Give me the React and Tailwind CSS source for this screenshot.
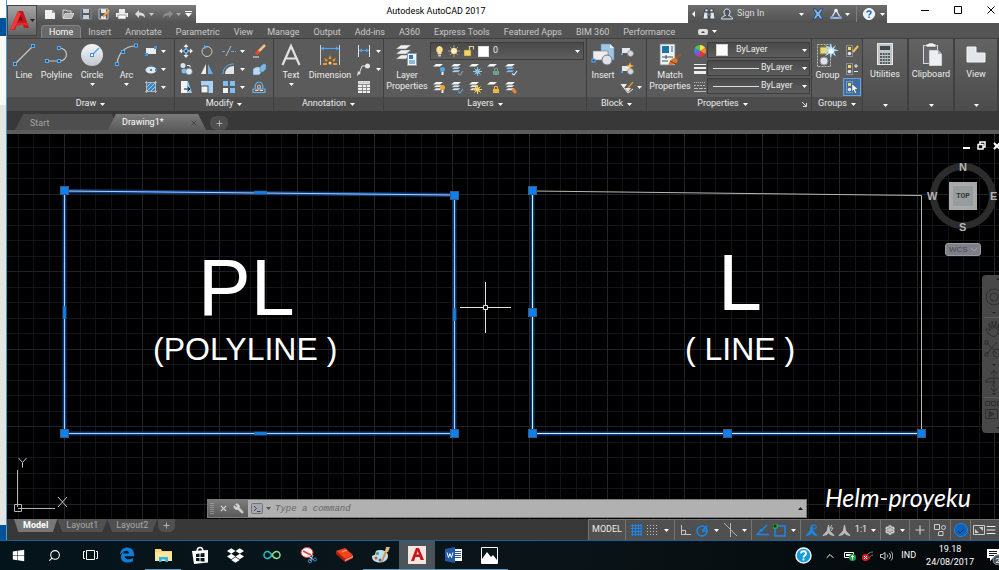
import React, { useState } from 'react';
import { ChevronUp, Search, Wrench, X, Settings, Plus, Menu } from 'lucide-react';
import { FaDropbox, FaWindows } from 'react-icons/fa';

const Svg = ({ w = 14, h = 14, box, className = '', children }) => (
  <svg width={w} height={h} viewBox={box || `0 0 ${w} ${h}`} fill="none" className={`shrink-0 ${className}`} aria-hidden="true">
    {children}
  </svg>
);

const Caret = ({ className = 'text-white' }) => (
  <Svg w={5} h={3} className={className}>
    <path d="M0 0h5L2.500 3z" fill="currentColor" />
  </Svg>
);

// ---------- big ribbon icons ----------

const Grip = ({ x, y }) => <rect x={x - 1.5} y={y - 1.5} width="3" height="3" fill="#1d4f86" stroke="#58aef5" />;

const LineIcon = () => (
  <Svg w={24} h={24}>
    <path d="M3 21L21 3" stroke="#c4c4c4" strokeWidth="1.200" />
    <Grip x={3} y={21} />
    <Grip x={21} y={3} />
  </Svg>
);

const PolylineIcon = () => (
  <Svg w={24} h={24}>
    <path d="M2 18h12c10 0 10-13 0-13" stroke="#c4c4c4" strokeWidth="1.200" />
    <Grip x={2} y={18} />
    <Grip x={14} y={18} />
    <Grip x={14} y={5} />
  </Svg>
);

const CircleIcon = () => (
  <Svg w={24} h={24}>
    <defs>
      <linearGradient id="disc" x1="0" y1="0" x2="0" y2="1">
        <stop offset="0" stopColor="#f4f6f8" />
        <stop offset="1" stopColor="#c2c8d0" />
      </linearGradient>
    </defs>
    <circle cx="12" cy="12" r="11" fill="url(#disc)" />
    <path d="M12 12l7-7" stroke="#4f9fe2" strokeWidth="1.200" />
    <rect x="10.500" y="10.500" width="3" height="3" fill="#fff" stroke="#3c91dc" />
  </Svg>
);

const ArcIcon = () => (
  <Svg w={24} h={24}>
    <path d="M2 21C3 11 9 3 21 3" stroke="#c4c4c4" strokeWidth="1.200" />
    <Grip x={2} y={21} />
    <Grip x={8} y={9} />
    <Grip x={21} y={2.5} />
  </Svg>
);

const TextIcon = () => (
  <Svg w={24} h={24}>
    <path d="M3.500 22L12 3l8.500 19M6.500 15.500h11" stroke="#e2e2e2" strokeWidth="2.200" />
  </Svg>
);

const DimensionIcon = () => (
  <Svg w={24} h={24}>
    <path d="M2.500 2v20M21.500 2v20" stroke="#cfcfcf" />
    <path d="M3 5.500h18" stroke="#4aa6f2" strokeWidth="1.200" />
    <path d="M3 5.500l3-2v4zM21 5.500l-3-2v4z" fill="#4aa6f2" />
    <path d="M12 12l1.500 4h-3zM6 15l4 2-2 2zM18 15l-4 2 2 2zM5 20h4v2H5zM15 20h4v2h-4z" fill="#f59a1c" />
    <circle cx="12" cy="20" r="1.500" fill="#ffd264" />
  </Svg>
);

const LayerPropsIcon = () => (
  <Svg w={24} h={24}>
    <path d="M6 2h10l-5 4H1zM6 7h10l-5 4H1zM6 12h8l-3 4H1z" fill="#eef0f2" stroke="#777" strokeWidth=".5" />
    <rect x="12.500" y="10.500" width="9" height="12" fill="#f4f4f4" stroke="#8f9aa5" />
    <rect x="14" y="12" width="4" height="4" fill="#2b7bc4" />
    <path d="M14 18h6M14 20h6" stroke="#2b7bc4" />
  </Svg>
);

const InsertIcon = () => (
  <Svg w={24} h={24}>
    <path d="M10 1h9l4 4v12H10z" fill="#9ec6e6" stroke="#5f8fb5" strokeWidth=".6" />
    <path d="M19 1v4h4" fill="#e7f2fa" />
    <rect x="2" y="8" width="15" height="9" fill="#eceef0" stroke="#777" strokeWidth=".6" />
    <circle cx="16" cy="17" r="5" fill="#dfe3e8" stroke="#6c7680" />
    <rect x="1" y="16" width="3" height="3" fill="#1d4f86" stroke="#58aef5" />
  </Svg>
);

const MatchIcon = () => (
  <Svg w={24} h={24}>
    <rect x="2" y="1" width="15" height="21" fill="#f1f2f3" stroke="#6f7d88" strokeWidth=".8" />
    <rect x="4" y="3" width="7" height="7" fill="#1c73a8" />
    <path d="M13 4h2M13 6h2M13 8h2M4 14h11M4 18h6M8 12v4" stroke="#35526a" />
    <path d="M23 11l-6 5" stroke="#9b5a26" strokeWidth="2" />
    <path d="M12 18c2-3 5-4 7-2s0 6-8 6c-1-1 0-2 1-4z" fill="#d9772a" />
    <path d="M12 18l6 3" stroke="#7c3f14" />
  </Svg>
);

const GroupIcon = () => (
  <Svg w={24} h={26}>
    <rect x="1.500" y="2.500" width="13" height="22" stroke="#bdbdbd" strokeDasharray="2 1" />
    <rect x="4" y="5" width="8" height="7" fill="#ecd86c" stroke="#8d8033" />
    <circle cx="8" cy="19" r="4" fill="#dfe4e9" stroke="#8a949e" />
    <path d="M15 1l1.200 5L20 3l-2 4 5 1.500-5 1 2 5-4-3-1 5-1.500-5-4.500 3 3-5-5-1 5-1.500-3-4 4.500 2z" fill="#a9dcff" />
    <circle cx="15" cy="9" r="2.500" fill="#fff" />
  </Svg>
);

const UtilitiesIcon = () => (
  <Svg w={24} h={24}>
    <rect x="4.500" y="1.500" width="15" height="21" fill="#bfc4c8" stroke="#e7e7e7" />
    <rect x="7" y="4" width="10" height="4" fill="#42474c" />
    <path d="M7 12h10M7 15h10M7 18h10M7 21h10" stroke="#53585d" strokeWidth="2" strokeDasharray="2 .7" />
  </Svg>
);

const ClipboardIcon = () => (
  <Svg w={24} h={24}>
    <rect x="4.500" y="3.500" width="14" height="18" fill="#66696c" stroke="#d8d8d8" />
    <path d="M7 5V2h2l1-1h4l1 1h2v3z" fill="#f4f4f4" stroke="#444" strokeWidth=".5" />
    <path d="M10 8h9l4 4v12H10z" fill="#eceef1" stroke="#777" strokeWidth=".5" />
    <path d="M19 8v4h4" fill="#a9b0b7" />
  </Svg>
);

const ViewIcon = () => (
  <Svg w={24} h={24}>
    <path d="M3 5h9v6h9v9H3z" fill="#e2e5e9" stroke="#f5f5f5" />
  </Svg>
);

// ---------- small ribbon icons ----------

const RectIcon = () => (
  <Svg>
    <rect x="2" y="4" width="10" height="6" fill="#e9ebee" />
    <path d="M1 9h3v3H1zM10 2h3v3h-3z" fill="#3d97e8" />
  </Svg>
);
const EllipseIcon = () => (
  <Svg>
    <ellipse cx="7" cy="8" rx="5.500" ry="3.500" fill="#e3e6ea" />
    <path d="M6 7h2v2H6zM6 3h2v2H6zM11 7h2v2h-2z" fill="#3d8ed6" />
  </Svg>
);
const HatchIcon = () => (
  <Svg>
    <rect x="3" y="3" width="8" height="8" fill="#3c83bd" />
    <path d="M3 11l8-8M3 7l4-4M7 11l4-4" stroke="#a5cdec" />
    <path d="M1 2.500h12M1 11.500h12M2.500 1v12M11.500 1v12" stroke="#b4b8bb" />
  </Svg>
);
const MoveIcon = () => (
  <Svg>
    <path d="M7 0l2.500 3h-5zM7 14l2.500-3h-5zM0 7l3-2.500v5zM14 7l-3-2.500v5z" fill="#eee" />
    <path d="M7 2v10M2 7h10" stroke="#eee" />
    <rect x="5.500" y="5.500" width="3" height="3" fill="#1d4f86" stroke="#58aef5" />
  </Svg>
);
const RotateIcon = () => (
  <Svg>
    <circle cx="7" cy="7.500" r="5" stroke="#ccc" />
    <path d="M4 1l4 2-4 2z" fill="#58aef5" />
  </Svg>
);
const TrimIcon = () => (
  <Svg>
    <path d="M0 7.500h4M9 7.500h5" stroke="#58aef5" strokeDasharray="3 1" />
    <path d="M4 12L9 2" stroke="#bcbcbc" />
  </Svg>
);
const EraseIcon = () => (
  <Svg>
    <path d="M13 1L6 8" stroke="#e9c58a" strokeWidth="2.500" />
    <path d="M7 7L4 10" stroke="#e14a20" strokeWidth="3.500" />
    <path d="M1 13h6" stroke="#efefef" />
  </Svg>
);
const CopyIcon = () => (
  <Svg>
    <circle cx="4" cy="3.500" r="2.500" fill="#dfe4e8" />
    <circle cx="5" cy="9" r="2.500" fill="#7dbdf0" />
    <circle cx="10" cy="9.500" r="3.300" fill="#dfe9f2" stroke="#5a6a78" strokeWidth=".5" />
    <path d="M8 3.500h3v2" stroke="#e9e9e9" />
  </Svg>
);
const MirrorIcon = () => (
  <Svg>
    <path d="M6 2v10H1z" fill="#eceef0" />
    <path d="M8 2v10h5z" fill="#69afe6" />
  </Svg>
);
const FilletIcon = () => (
  <Svg>
    <path d="M3 12C3 7 7 4 12 4v8z" fill="#e3e6e9" />
    <path d="M1 12C1 5 6 2 12 2" stroke="#58aef5" />
  </Svg>
);
const ExplodeIcon = () => (
  <Svg>
    <path d="M1 7l3-2h5v6l-2 2H1z" fill="#b9daf2" stroke="#4a7ea8" strokeWidth=".6" />
    <path d="M8 5l3-3h3v5l-3 3H8z" fill="#7fb8e6" stroke="#4a7ea8" strokeWidth=".6" />
  </Svg>
);
const StretchIcon = () => (
  <Svg>
    <path d="M2 1h6v12H2z" fill="#f0f2f4" />
    <path d="M8 1h1l4 12H8z" fill="#8ecbf5" />
    <path d="M5 9h6M8.500 7l2.500 2-2.500 2" stroke="#111" />
  </Svg>
);
const ScaleIcon = () => (
  <Svg>
    <rect x="1" y="1" width="12" height="12" fill="#a8d2f3" />
    <rect x="1" y="6" width="7" height="7" fill="#eef0f2" stroke="#4a4a4a" />
  </Svg>
);
const ArrayIcon = () => (
  <Svg>
    <path d="M1 1h5v5H1zM8 1h5v5H8zM8 8h5v5H8z" fill="#7dbdf0" />
    <path d="M1 8h5v5H1z" fill="#eaf1f7" />
  </Svg>
);
const OffsetIcon = () => (
  <Svg>
    <path d="M1 12.500h12V9h-3c2-3 0-7-3-7S2 6 4 9H1z" stroke="#6cb4ec" strokeWidth="1.200" />
    <path d="M3 10.500h3V8c-2-4 4-4 2 0v2.500h3" stroke="#e4e4e4" />
  </Svg>
);
const LinearIcon = () => (
  <Svg>
    <path d="M1.500 1v12M12.500 1v12" stroke="#e3e3e3" />
    <path d="M2 6.500h10" stroke="#4aa6f2" />
    <path d="M2 6.500l3-2v4zM12 6.500l-3-2v4z" fill="#4aa6f2" />
  </Svg>
);
const LeaderIcon = () => (
  <Svg>
    <path d="M2 12L5 4h5" stroke="#ddd" />
    <circle cx="10.500" cy="4" r="2.500" fill="#dde8f2" />
    <path d="M0 14l1-5 3 2z" fill="#ddd" />
  </Svg>
);
const TableIcon = () => (
  <Svg>
    <rect x="1" y="1" width="12" height="12" fill="#f1f1f1" />
    <path d="M1 2.500h12" stroke="#c9ced3" strokeWidth="2" />
    <path d="M1 4.500h12M1 7.500h12M1 10.500h12M5.500 4v9M9.500 4v9" stroke="#8a8a8a" />
  </Svg>
);

// stacked sheets with a coloured mark in the corner
const LayerIcon = ({ mark = '#4da6f0', kind = 'dot', stack = true, tint = '#f0f1f3' }) => (
  <Svg>
    {stack && <path d="M4 5h7l-3 2.500H1zM4 8h7l-3 2.500H1z" fill={tint} stroke="#444" strokeWidth=".5" />}
    <path d="M4 2h7l-3 2.500H1z" fill="#f4f5f6" />
    {kind === 'dot' && (
      <>
        <circle cx="10.500" cy="7.500" r="2.500" fill={mark} />
        <path d="M9.500 10h2v3h-2z" fill="#f2f2f2" />
      </>
    )}
    {kind === 'sun' && (
      <>
        <path d="M9.500 5v9M5 9.500h9M6.500 6.500l6 6M12.500 6.500l-6 6" stroke={mark} />
        <circle cx="9.500" cy="9.500" r="2.300" fill={mark} />
      </>
    )}
    {kind === 'lock' && (
      <>
        <rect x="7" y="9" width="6" height="4" fill={mark} />
        <path d="M8.500 9V6.500h3V9" stroke={mark} />
      </>
    )}
    {kind === 'check' && <path d="M8 11.500l2 1.500 3-4" stroke={mark} strokeWidth="1.200" />}
    {kind === 'brush' && <path d="M7 10l3-2 3 4-2 2z" fill={mark} />}
  </Svg>
);

const BlockIcon = ({ star }) => (
  <Svg>
    <rect x="2" y="4" width="8" height="5" fill="#e6e8eb" />
    <circle cx="10.500" cy="9.500" r="3" fill="#d4d9de" stroke="#777" strokeWidth=".6" />
    <rect x="1" y="9" width="2" height="2" fill="#4da6f0" />
    {star && <path d="M10 0l1 3 3 1-3 1-1 3-1-3-3-1 3-1z" fill="#fdb83f" />}
  </Svg>
);
const AttrIcon = () => (
  <Svg>
    <path d="M1 4h6L4 8zM5 8h6l-3 4z" fill="#ededed" />
    <path d="M1 4l3 4 4 5 5-4" stroke="#ededed" />
    <path d="M13 2L8 8" stroke="#dc8f35" strokeWidth="1.500" />
  </Svg>
);

const ColorWheel = () => (
  <Svg w={12} h={12}>
    <path d="M6 6V0a6 6 0 0 1 5.200 3z" fill="#ffe04a" />
    <path d="M6 6l5.200-3a6 6 0 0 1 0 6z" fill="#f28b2a" />
    <path d="M6 6l5.200 3A6 6 0 0 1 6 12z" fill="#e23636" />
    <path d="M6 6v6A6 6 0 0 1 .8 9z" fill="#a246c9" />
    <path d="M6 6L.8 9a6 6 0 0 1 0-6z" fill="#3f7fe0" />
    <path d="M6 6L.8 3A6 6 0 0 1 6 0z" fill="#54c05a" />
  </Svg>
);
const WeightIcon = () => (
  <Svg w={12} h={12}>
    <path d="M0 1.500h12" stroke="#eee" />
    <path d="M0 5h12" stroke="#eee" strokeWidth="2" />
    <path d="M0 9.500h12" stroke="#eee" strokeWidth="3" />
  </Svg>
);
const LinetypeIcon = () => (
  <Svg w={12} h={12}>
    <path d="M0 1.500h12" stroke="#bbb" strokeDasharray="1 1" />
    <path d="M0 4.500h12" stroke="#bbb" strokeDasharray="2 1" />
    <path d="M0 7.500h12" stroke="#bbb" strokeDasharray="4 1" />
    <path d="M0 10.500h12" stroke="#bbb" />
  </Svg>
);

const GroupSmall = ({ kind }) => (
  <Svg>
    <path d="M1.500 1.500h6v11h-6z" stroke="#bdbdbd" strokeDasharray="1 1" />
    <rect x="3" y="3" width="3" height="3" fill="#ecd86c" />
    <circle cx="4.500" cy="9.500" r="1.800" fill="#dfe4e9" />
    {kind === 'edit' && <path d="M13 2L8 8" stroke="#f3c14b" strokeWidth="2" />}
    {kind === 'add' && <path d="M9 4h4M11 2v4M9 9.500h4" stroke="#e9e9e9" />}
    {kind === 'pick' && <path d="M7 4l6 5-3 .5 1.500 3-1.500 1L8.500 10 7 12z" fill="#fff" stroke="#333" strokeWidth=".4" />}
  </Svg>
);

// ---------- ribbon building blocks ----------

const BigButton = ({ icon, lines, width, caret }) => (
  <button className={`flex flex-col items-center ${width}`}>
    <span className="flex h-[26px] items-center">{icon}</span>
    <span className="pt-[2px]">
      {lines.map((line) => (
        <span key={line} className="block whitespace-nowrap leading-[11px]">{line}</span>
      ))}
    </span>
    {caret && <Caret className="mt-[2px] text-white" />}
  </button>
);

const SmallButton = ({ icon, label, width = 'w-5', active }) => (
  <button
    aria-label={label}
    className={`flex h-[18px] items-center justify-center ${width} ${active ? 'border border-[#6f9fd0] bg-[#3a6ea5]' : ''}`}
  >
    {icon}
  </button>
);

const Panel = ({ title, width, launcher, children }) => (
  <section className={`flex shrink-0 flex-col border-r border-[#3f3f3f] bg-[#5b5b5b] ${width}`}>
    <div className="flex h-[58px] pt-[3px]">{children}</div>
    <button className="flex h-[14px] w-full items-center justify-center gap-1 bg-[#4c4c4c]">
      <span className={launcher ? 'ml-auto' : ''}>{title}</span>
      <Caret />
      {launcher && (
        <Svg w={5} h={5} className="mr-1 ml-auto">
          <path d="M0 0l4 4M4.500 1v3.500H1" stroke="#ddd" />
        </Svg>
      )}
    </button>
  </section>
);

const TallPanel = ({ title, width, icon }) => (
  <button className={`flex shrink-0 flex-col items-center border-r-2 border-[#404040] bg-linear-to-b from-[#636363] to-[#4c4c4c] pt-[3px] ${width}`}>
    {icon}
    <span className="mt-[3px] leading-[11px]">{title}</span>
    <Caret className="mt-auto mb-1 text-white" />
  </button>
);

const ByLayerSelect = ({ label, swatch }) => (
  <div className="mb-[2px] flex h-4 items-center border border-[#3c3c3c] bg-linear-to-b from-[#4a4a4a] to-[#5d5d5d] pr-[2px]">
    {swatch ? (
      <span className="mr-1 ml-2 size-[12px] shrink-0 border border-[#d0d0d0] bg-white" />
    ) : (
      <span className="ml-[5px] h-px flex-1 bg-[#ddd]" />
    )}
    <select aria-label={label} className={`appearance-none bg-transparent outline-none ${swatch ? 'flex-1 pl-1' : 'w-[43px] pl-[2px]'}`}>
      <option>ByLayer</option>
    </select>
    <Caret />
  </div>
);

const drawSmall = [
  { label: 'Rectangle', icon: <RectIcon /> },
  { label: 'Ellipse', icon: <EllipseIcon /> },
  { label: 'Hatch', icon: <HatchIcon /> },
];

const modifyRows = [
  [['Move', <MoveIcon />], ['Rotate', <RotateIcon />], ['Trim', <TrimIcon />], ['Erase', <EraseIcon />]],
  [['Copy', <CopyIcon />], ['Mirror', <MirrorIcon />], ['Fillet', <FilletIcon />], ['Explode', <ExplodeIcon />]],
  [['Stretch', <StretchIcon />], ['Scale', <ScaleIcon />], ['Array', <ArrayIcon />], ['Offset', <OffsetIcon />]],
];

const layerRows = [
  [
    ['Off', <LayerIcon stack={false} />],
    ['Isolate', <LayerIcon kind="check" mark="#8f9aa3" tint="#a9d3f5" />],
    ['Freeze', <LayerIcon stack={false} kind="sun" mark="#8cc8f5" />],
    ['Lock', <LayerIcon stack={false} kind="lock" mark="#6f9f93" />],
    ['Make Current', <LayerIcon kind="check" mark="#cfe6f7" tint="#7dbdf0" />],
  ],
  [
    ['Turn All On', <LayerIcon mark="#f8a62f" />],
    ['Unisolate', <LayerIcon kind="check" mark="#5fa3d8" tint="#cfe6f7" />],
    ['Thaw All', <LayerIcon kind="sun" mark="#ffd65a" />],
    ['Unlock', <LayerIcon stack={false} kind="lock" mark="#f3b93b" />],
    ['Match Layer', <LayerIcon kind="brush" mark="#e58432" />],
  ],
];

const Ribbon = () => (
  <div className="flex h-[73px] overflow-hidden border-t border-[#404040] bg-[#5b5b5b] text-[9px] text-[#ececec]">
    <Panel title="Draw" width="w-[168px]">
      <BigButton icon={<LineIcon />} lines={['Line']} width="w-[34px]" />
      <BigButton icon={<PolylineIcon />} lines={['Polyline']} width="w-[31px]" />
      <BigButton icon={<CircleIcon />} lines={['Circle']} width="w-[40px]" caret />
      <BigButton icon={<ArcIcon />} lines={['Arc']} width="w-[29px]" caret />
      <div>
        {drawSmall.map((item) => (
          <div key={item.label} className="flex items-center">
            <SmallButton {...item} />
            <Caret />
          </div>
        ))}
      </div>
    </Panel>

    <Panel title="Modify" width="w-[99px]">
      <div>
        {modifyRows.map((row) => (
          <div key={row[0][0]} className="grid grid-cols-[21px_22px_22px_7px_24px] items-center">
            {row.map(([label, icon], i) => (
              <React.Fragment key={label}>
                {i === 3 && <Caret />}
                <SmallButton label={label} icon={icon} width="w-full" />
              </React.Fragment>
            ))}
          </div>
        ))}
      </div>
    </Panel>

    <Panel title="Annotation" width="w-[110px]">
      <BigButton icon={<TextIcon />} lines={['Text']} width="w-[34px]" caret />
      <BigButton icon={<DimensionIcon />} lines={['Dimension']} width="w-[44px]" />
      <div>
        <div className="flex items-center"><SmallButton label="Linear" icon={<LinearIcon />} width="w-[24px]" /><Caret /></div>
        <div className="flex items-center"><SmallButton label="Leader" icon={<LeaderIcon />} width="w-[24px]" /><Caret /></div>
        <SmallButton label="Table" icon={<TableIcon />} width="w-[24px]" />
      </div>
    </Panel>

    <Panel title="Layers" width="w-[203px]">
      <BigButton icon={<LayerPropsIcon />} lines={['Layer', 'Properties']} width="w-[46px]" />
      <div className="flex-1 pr-[2px]">
        <div className="flex h-[18px] items-center gap-1 border border-[#3c3c3c] bg-linear-to-b from-[#4a4a4a] to-[#5d5d5d] pr-[3px] pl-1">
          <Svg w={9} h={13}>
            <path d="M4.500 1a3.500 3.500 0 0 1 2 6.200V9h-4V7.200A3.500 3.500 0 0 1 4.500 1z" fill="#fbe08a" />
            <path d="M3 9.500h3v2H3z" fill="#c9c9c9" />
          </Svg>
          <Svg w={12} h={12}>
            <path d="M6 0v12M0 6h12M2 2l8 8M10 2l-8 8" stroke="#a89c78" />
            <circle cx="6" cy="6" r="3" fill="#fff0b8" />
          </Svg>
          <Svg w={10} h={12}>
            <rect x="0" y="5" width="7" height="6" fill="#f1d56d" stroke="#8c7521" strokeWidth=".6" />
            <path d="M5.500 5V1.500h4v3" stroke="#e2cf80" strokeWidth="1.200" />
          </Svg>
          <span className="size-[11px] border border-[#e0e0e0] bg-white" />
          <select aria-label="Layer" className="flex-1 appearance-none bg-transparent outline-none">
            <option>0</option>
          </select>
          <Caret />
        </div>
        {layerRows.map((row) => (
          <div key={row[0][0]} className="flex">
            {row.map(([label, icon]) => (
              <SmallButton key={label} label={label} icon={icon} width="w-[18px]" />
            ))}
          </div>
        ))}
      </div>
    </Panel>

    <Panel title="Block" width="w-[60px]">
      <BigButton icon={<InsertIcon />} lines={['Insert']} width="w-[32px]" />
      <div>
        <SmallButton label="Create" icon={<BlockIcon />} width="w-4" />
        <SmallButton label="Edit" icon={<BlockIcon star />} width="w-4" />
        <div className="flex items-center gap-[2px]"><SmallButton label="Edit Attributes" icon={<AttrIcon />} width="w-4" /><Caret /></div>
      </div>
    </Panel>

    <Panel title="Properties" width="w-[165px]" launcher>
      <BigButton icon={<MatchIcon />} lines={['Match', 'Properties']} width="w-[46px]" />
      <div className="flex w-[14px] flex-col">
        <span className="flex h-[18px] items-center justify-center"><ColorWheel /></span>
        <span className="flex h-[18px] items-center justify-center"><WeightIcon /></span>
        <span className="flex h-[18px] items-center justify-center"><LinetypeIcon /></span>
      </div>
      <div className="flex-1 pr-px">
        <ByLayerSelect label="Object color" swatch />
        <ByLayerSelect label="Lineweight" />
        <ByLayerSelect label="Linetype" />
      </div>
    </Panel>

    <Panel title="Groups" width="w-[51px]">
      <BigButton icon={<GroupIcon />} lines={['Group']} width="w-[31px]" />
      <div>
        <SmallButton label="Group Edit" icon={<GroupSmall kind="edit" />} width="w-[18px]" />
        <SmallButton label="Add/Remove" icon={<GroupSmall kind="add" />} width="w-[18px]" />
        <SmallButton label="Group Selection" icon={<GroupSmall kind="pick" />} width="w-[18px]" active />
      </div>
    </Panel>

    <TallPanel title="Utilities" width="w-[46px]" icon={<UtilitiesIcon />} />
    <TallPanel title="Clipboard" width="w-[46px]" icon={<ClipboardIcon />} />
    <TallPanel title="View" width="w-[44px]" icon={<ViewIcon />} />
  </div>
);

// ---------- title bar ----------

const quickAccess = [
  ['New', <Svg w={12} h={12}><path d="M1 2h7l3 3v6H1z" fill="#f1f1f1" /><path d="M8 2v3h3" fill="#9d9d9d" /></Svg>],
  ['Open', <Svg w={12} h={12}><path d="M1 10V2h3l1 1h4v2" stroke="#ddd" /><path d="M1 10.500l2-5h9l-2.500 5z" fill="#b9b9b9" stroke="#eee" strokeWidth=".7" /></Svg>],
  ['Save', <Svg w={12} h={12}><path d="M1 1h10v10H1z" fill="#4f5964" stroke="#858d95" /><path d="M3 1h6v4H3zM3 7h6v4H3z" fill="#c9cfd4" /></Svg>],
  ['Save As', <Svg w={12} h={12}><path d="M1 1h9v10H1z" fill="#4f5964" stroke="#b9c2ca" /><path d="M3 1h5v4H3zM3 8h5v3H3z" fill="#e5e5e5" /><path d="M11 2L5 9" stroke="#f5a23a" strokeWidth="2" /></Svg>],
  ['Plot', <Svg w={12} h={12}><path d="M3 1h6v4H3zM0 5h12v4H0z" fill="#eee" /><path d="M2 7h8v4H2z" fill="#fff" stroke="#666" strokeWidth=".6" /></Svg>],
];

const QuickAccess = () => (
  <div className="mt-[5px] flex h-[18px] w-[159px] items-center bg-linear-to-b from-[#7c7c7c] to-[#525252] pl-1">
    {quickAccess.map(([label, icon]) => (
      <button key={label} aria-label={label} className="flex w-[18px] justify-center">{icon}</button>
    ))}
    <button aria-label="Undo" className="flex w-[18px] justify-center">
      <Svg w={11} h={9}><path d="M0 4l4-4v2.500c4 0 6 1.500 6 5.500-1-2-3-2.500-6-2.500V8z" fill="#dcdcdc" /></Svg>
    </button>
    <Caret className="mr-1 text-[#ccc]" />
    <button aria-label="Redo" className="flex w-[18px] justify-center">
      <Svg w={11} h={9}><path d="M11 4L7 0v2.500C3 2.500 1 4 1 8c1-2 3-2.500 6-2.500V8z" fill="#8b8b8b" /></Svg>
    </button>
    <Caret className="mr-1 text-[#aaa]" />
    <button aria-label="Customize" className="flex flex-col items-center">
      <span className="mb-px h-px w-[7px] bg-white" />
      <Svg w={7} h={4}><path d="M0 0h7L3.500 4z" fill="#fff" /></Svg>
    </button>
  </div>
);

const InfoCenter = () => (
  <div className="mt-[5px] flex h-[18px] w-[199px] items-center bg-linear-to-b from-[#6d6d6d] to-[#505050] pr-[2px] pl-1 text-[9px] text-[#ddd]">
    <Svg w={3} h={6}><path d="M3 0v6L0 3z" fill="#fff" /></Svg>
    <button aria-label="Search" className="ml-2">
      <Svg w={12} h={12}>
        <path d="M2 1h3v3H2zM7 1h3v3H7zM1 4h4v7H0zM7 4h4l1 7H7zM5 5h2v3H5z" fill="#dfe6ee" stroke="#30353a" strokeWidth=".7" />
      </Svg>
    </button>
    <button className="ml-[6px] flex items-center gap-1">
      <Svg w={12} h={12}>
        <path d="M6 1c2 0 3 1.500 3 3S8 7 7.500 7.500c2 .5 4 1.500 4 3.500H.5c0-2 2-3 4-3.500C4 7 3 5.500 3 4s1-3 3-3z" fill="#4b545e" stroke="#e5e9ee" />
      </Svg>
      Sign In
    </button>
    <Caret className="ml-auto text-white" />
    <button aria-label="Exchange" className="ml-2">
      <Svg w={12} h={12}>
        <path d="M1 1h3l2 3 2-3h3L8 6l3 5H8L6 8l-2 3H1l3-5z" fill="#7fb2e6" stroke="#1c3f78" strokeWidth=".8" />
      </Svg>
    </button>
    <button aria-label="Stay Connected" className="ml-[6px] flex items-center gap-[3px]">
      <Svg w={12} h={12}>
        <path d="M6 2l4.500 8h-9z" stroke="#c9d8ec" strokeWidth="1.500" />
        <circle cx="6" cy="2.500" r="1.800" fill="#eef" />
        <circle cx="2" cy="9.500" r="1.800" fill="#7ea3d8" />
        <circle cx="10" cy="9.500" r="1.800" fill="#7ea3d8" />
      </Svg>
      <Caret />
    </button>
    <span className="mx-[6px] h-4 w-px bg-[#808080]" />
    <button aria-label="Help" className="flex items-center gap-[5px]">
      <Svg w={12} h={12}>
        <circle cx="6" cy="6" r="5.500" fill="#e9f2fb" stroke="#fff" />
        <path d="M4 4.500C4 2.500 8 2.500 8 4.500 8 6 6 6 6 7.500M6 8.500V10" stroke="#1c6cc0" strokeWidth="1.500" />
      </Svg>
      <Caret />
    </button>
  </div>
);

const menuTabs = ['Home', 'Insert', 'Annotate', 'Parametric', 'View', 'Manage', 'Output', 'Add-ins', 'A360', 'Express Tools', 'Featured Apps', 'BIM 360', 'Performance'];

const Header = ({ tab, onTab }) => (
  <header className="flex h-[38px] bg-white">
    <div className="flex w-[30px] shrink-0 flex-col border-t-[5px] border-white bg-[#525252]">
      <button aria-label="Application menu" className="flex h-[31px] items-center border border-[#444] bg-linear-to-b from-[#a5a5a5] to-[#636363] pl-[2px]">
        <Svg w={19} h={22}>
          <path d="M0 20L8 1h5l6 17h-5l-1.500-4.500H7L5 20z" fill="#c5161d" />
          <path d="M8 1L0 20l4-1 7-15z" fill="#ee3a3a" />
          <path d="M8.500 10.500L10.500 5l2 5.500z" fill="#7c0d12" />
          <path d="M4 17c4-4 7-5 13-4l1 3c-5-2-9-1-14 2z" fill="#e02a2e" />
        </Svg>
        <Caret className="ml-px text-[#222]" />
      </button>
    </div>
    <div className="min-w-0 flex-1">
      <div className="flex h-[23px]">
        <QuickAccess />
        <h1 className="flex-1 pt-[4px] pr-3 text-center text-[9px] leading-[14px] text-black">Autodesk AutoCAD 2017</h1>
        <InfoCenter />
        <div className="flex w-[112px] justify-between pt-[6px] pr-1 pl-[34px] text-black">
          <button aria-label="Minimize" className="h-2"><Svg w={8} h={8}><path d="M0 4.500h8" stroke="currentColor" /></Svg></button>
          <button aria-label="Maximize" className="h-2"><Svg w={8} h={8}><path d="M.5.500h7v7h-7z" stroke="currentColor" /></Svg></button>
          <button aria-label="Close" className="h-2"><Svg w={8} h={8}><path d="M.5.500l7 7M7.500.500l-7 7" stroke="currentColor" /></Svg></button>
        </div>
      </div>
      <nav className="flex h-[15px] items-end bg-[#545454] pl-1 text-[9px] text-[#c9c9c9]">
        {menuTabs.map((name) => (
          <button
            key={name}
            onClick={() => onTab(name)}
            className={`h-[13px] px-[7px] leading-[12px] whitespace-nowrap ${tab === name ? 'rounded-t-sm border border-b-0 border-[#858585] bg-[#696969] text-white' : ''}`}
          >
            {name}
          </button>
        ))}
        <button aria-label="Minimize ribbon" className="ml-4 flex h-[13px] items-center gap-1">
          <Svg w={10} h={6}><rect width="10" height="6" rx="2" fill="#ddd" /><path d="M3 4l2-2 2 2z" fill="#444" /></Svg>
          <Caret />
        </button>
      </nav>
    </div>
  </header>
);

const FileTabs = () => (
  <div className="flex h-[23px] items-end border-b-4 border-[#5c5c5c] bg-[#383838] pl-2 text-[9px]">
    <button className="h-4 w-[103px] rounded-t-md bg-[#4e4e4e] pl-[15px] text-left leading-[18px] text-[#a5a5a5] [clip-path:polygon(8%_0,94%_0,100%_100%,0_100%)]">Start</button>
    <div className="-ml-[10px] flex h-4 w-[98px] items-center justify-between rounded-t-md bg-linear-to-b from-[#7a7a7a] to-[#5c5c5c] pt-[2px] pr-2 pl-[14px] text-white [clip-path:polygon(8%_0,92%_0,100%_100%,0_100%)]">
      <button>Drawing1*</button>
      <button aria-label="Close Drawing1"><X size={8} className="text-[#333]" /></button>
    </div>
    <button aria-label="New drawing" className="ml-1 flex h-[14px] w-[18px] items-center justify-center rounded-md bg-[#4e4e4e] text-[#ccc]"><Plus size={9} /></button>
  </div>
);

// ---------- drawing area ----------

const PITCH = 15.5;
const lines = (start, first, count) => Array.from({ length: count }, (_, i) => ({
  pos: Math.round(start + i * PITCH) + 0.5,
  major: (i - first) % 5 === 0,
}));
const columns = lines(10.5, 3, 130);
const rows = lines(13, 3, 70);

const SquareGrip = ({ x, y }) => <rect x={x - 3.5} y={y - 3.5} width="8" height="8" fill="#0a80f5" stroke="#3f5c7d" />;
const BarGrip = ({ x, y, tall }) => (
  <rect x={x - (tall ? 1 : 5.5)} y={y - (tall ? 5.5 : 1)} width={tall ? 3 : 12} height={tall ? 12 : 3} fill="#0a80f5" stroke="#3f5c7d" strokeWidth=".6" />
);

const Drawing = () => (
  <svg className="absolute inset-0 size-full" fontFamily="'Liberation Sans', Arial, sans-serif" fill="#fff">
    {columns.map((c) => <path key={`c${c.pos}`} d={`M${c.pos} 0V1200`} stroke={c.major ? '#23252f' : '#101419'} />)}
    {rows.map((r) => <path key={`r${r.pos}`} d={`M0 ${r.pos}H2100`} stroke={r.major ? '#1e222c' : '#12161a'} />)}

    <path d="M57.500 57L447.500 61V299.500H57.500z" fill="none" stroke="#0a55b5" strokeWidth="4" opacity=".7" />
    <path d="M57.500 57L447.500 61V299.500H57.500z" fill="none" stroke="#b4cef2" />
    <path d="M525.500 57L914.500 61.500V299.500" fill="none" stroke="#b9b9b0" />
    <path d="M525.500 57V299.500H914.500" fill="none" stroke="#0a55b5" strokeWidth="4" opacity=".7" />
    <path d="M525.500 57V299.500H914.500" fill="none" stroke="#dce9fa" />

    <SquareGrip x={57} y={56} />
    <SquareGrip x={447} y={61} />
    <SquareGrip x={57} y={299} />
    <SquareGrip x={447} y={299} />
    <BarGrip x={253} y={58} />
    <BarGrip x={253} y={299} />
    <BarGrip x={57} y={178} tall />
    <BarGrip x={447} y={180} tall />
    <SquareGrip x={525} y={56} />
    <SquareGrip x={525} y={178} />
    <SquareGrip x={525} y={299} />
    <SquareGrip x={720} y={299} />
    <SquareGrip x={914} y={299} />

    <text x="191" y="181" fontSize="79">PL</text>
    <text x="146" y="226" fontSize="32">(POLYLINE )</text>
    <text x="711" y="176" fontSize="79">L</text>
    <text x="678" y="226" fontSize="32">( LINE )</text>

    <path d="M453 173.500h23M481 173.500h23M478.500 148v23M478.500 176v23M476.500 171.500h4v4h-4z" fill="none" stroke="#e4e4e4" />

    <path d="M7.500 370.500h7v7h-7zM10.500 336v37M11 374.500h37" fill="none" stroke="#b5b5b0" />
    <path d="M11.500 324l4 4.500 4-4.500M15.500 328.500v5M51 363l9 10M60 363l-9 10" fill="none" stroke="#c4c4c0" />
  </svg>
);

const ViewCube = () => (
  <div className="absolute top-[29px] right-px h-[100px] w-[68px] text-[11px] font-bold text-[#b4b4b4]">
    <div className="size-[66px] rounded-full border-[7px] border-[#2c2c2c]" />
    <button className="absolute top-[19px] left-[19px] size-[28px] border-4 border-[#a9a9a9] bg-[#979c9f] font-[Roboto] text-[7px] leading-[20px] text-[#333]">TOP</button>
    <span className="absolute -top-[3px] left-[29px] leading-[14px]">N</span>
    <span className="absolute top-[26px] -left-[3px] leading-[14px]">W</span>
    <span className="absolute top-[26px] left-[60px] leading-[14px]">E</span>
    <span className="absolute top-[57px] left-[29px] leading-[14px]">S</span>
    <button className="absolute top-[80px] left-[15px] flex h-[13px] w-9 items-center justify-between rounded-[3px] border border-[#9b9ba3] bg-[#7f7f88] px-[3px] text-[8px] font-normal text-[#4a4a52]">
      WCS
      <Svg w={6} h={4}><path d="M0 0l3 3 3-3" stroke="#9aa3b5" /></Svg>
    </button>
  </div>
);

const NavBar = () => (
  <div className="absolute top-[141px] right-0 h-[158px] w-[17px] overflow-hidden rounded-l bg-[#484848]">
    <Svg w={22} h={158}>
      <g stroke="#2f2f2f">
        <circle cx="12" cy="22" r="8" />
        <circle cx="12" cy="22" r="4" />
        <path d="M2 42.500h20" stroke="#5a5a5a" />
        <path d="M5 56c-3-3 1-3 3 0l-1-8 3 6v-8l2 7 2-7v8l3-5-1 8c0 6-8 6-11-1z" />
        <path d="M5 68l10 11M15 67L5 79M3 66h3v3H3zM3 78h3v3H3z" />
        <circle cx="15" cy="78" r="4" />
        <path d="M3 106c4-4 14-4 18 0M12 96v20M9 99l3-4 3 4M3 107h10l-3 4M9 113l3 4 3-4" />
        <path d="M2 122.500h20" stroke="#5a5a5a" />
        <path d="M3.500 126.500h4v4h-4zM9.500 126.500h4v4h-4zM15.500 126.500h4v4h-4zM3.500 134.500h12v9h-12z" />
        <path d="M7 136l5 3-5 3z" fill="#2f2f2f" />
      </g>
      <path d="M10 37h4l-2 2zM10 89h4l-2 2zM10 118h4l-2 2zM14 5h4l-2-2zM14 152h4l-2 2z" fill="#222" />
    </Svg>
  </div>
);

const CommandLine = () => (
  <form className="absolute bottom-px left-[200px] flex h-[19px] w-[600px] max-w-[70%] items-center border border-[#7a7a7a] bg-[#b1b1b1]" onSubmit={(e) => e.preventDefault()}>
    <div className="flex h-full w-10 shrink-0 items-center gap-[5px] bg-linear-to-b from-[#7c7c7c] to-[#5a5a5a] pl-[2px] text-[#d2d2d2]">
      <Svg w={4} h={12}><path d="M1 0v12M3 0v12" stroke="#bbb" strokeDasharray="1 1" /></Svg>
      <button type="button" aria-label="Close command line"><X size={9} strokeWidth={3} /></button>
      <button type="button" aria-label="Customize command line"><Wrench size={11} fill="currentColor" className="-scale-x-100" /></button>
    </div>
    <button type="button" aria-label="Recent commands" className="ml-[3px] flex items-center gap-[3px]">
      <Svg w={12} h={11}>
        <rect x=".5" y=".5" width="11" height="10" rx="1" fill="#a2a8ad" stroke="#70757a" />
        <path d="M3 3l2.500 2.500L3 8M6 8.500h3.500" stroke="#444" />
      </Svg>
      <Caret className="text-[#555]" />
    </button>
    <input aria-label="Command" placeholder="Type a command" className="ml-1 min-w-0 flex-1 bg-transparent pt-[2px] font-['Liberation_Mono',monospace] text-[9px] italic outline-none placeholder:text-[#666]" />
    <button type="button" aria-label="Command history" className="mr-[3px]"><Caret className="rotate-180 text-[#222]" /></button>
  </form>
);

const Canvas = () => (
  <main className="relative min-h-0 flex-1 overflow-hidden bg-black font-['Liberation_Sans',Arial,sans-serif]">
    <Drawing />
    <div className="absolute top-[7px] -right-[2px] flex items-center gap-[6px] text-white">
      <button aria-label="Minimize drawing"><Svg w={9} h={9}><path d="M1 7h7" stroke="currentColor" strokeWidth="2" /></Svg></button>
      <button aria-label="Restore drawing"><Svg w={9} h={9}><path d="M1 3.500h5v4.500H1zM3 3V1h5v5H6" stroke="currentColor" strokeWidth="1.500" /></Svg></button>
      <button aria-label="Close drawing"><Svg w={9} h={9}><path d="M2 2l6 6M8 2L2 8" stroke="currentColor" strokeWidth="2" /></Svg></button>
    </div>
    <ViewCube />
    <NavBar />
    <CommandLine />
    <p className="absolute right-7 bottom-[8px] font-[Lato] text-[25px] leading-[28px] text-white italic">Helm-proyeku</p>
  </main>
);

// ---------- status bar ----------

const Cell = ({ children, className = '' }) => (
  <div className={`flex h-full items-center justify-around border-l border-[#747474] px-[2px] ${className}`}>{children}</div>
);

const Tool = ({ label, children }) => <button aria-label={label} className="flex items-center">{children}</button>;

const Person = ({ color, mark }) => (
  <Svg w={13} h={13}>
    <path d="M6.500 1l1.200 6L12 11.500 8 10.500l-1.500-2-1.500 2-4 1L5.300 7z" fill={color} stroke={color} />
    {mark === 'dot' && <circle cx="9" cy="3" r="2.200" stroke={color} />}
    {mark === 'bolt' && <path d="M10 1L8 4h3l-2 3" stroke={color} />}
  </Svg>
);

const StatusTools = () => (
  <div className="ml-auto flex h-full w-[411px] shrink-0 items-stretch overflow-hidden border-t border-[#747474] bg-[#505050] text-[9px] text-[#eee]">
    <Cell className="w-[37px] shrink-0"><button>MODEL</button></Cell>
    <Cell className="w-[49px] shrink-0">
      <Tool label="Grid"><Svg w={11} h={12}><path d="M1.500 0v12M4.500 0v12M7.500 0v12M10 0v12M0 1.500h11M0 4.500h11M0 7.500h11M0 10.500h11" stroke="#1688f0" /></Svg></Tool>
      <Tool label="Snap"><Svg w={11} h={12}><path d="M0 1.500h11M0 4.500h11M0 7.500h11M0 10.500h11" stroke="#c4c4c4" strokeDasharray="1 2" /></Svg></Tool>
      <Caret />
    </Cell>
    <Cell className="w-[77px] shrink-0">
      <Tool label="Ortho"><Svg w={11} h={11}><path d="M1.500 0v9.500H11M1.500 5.500h4v4" stroke="#c4c4c4" /></Svg></Tool>
      <Tool label="Polar"><Svg w={13} h={13}><circle cx="6" cy="7" r="5" stroke="#1688f0" strokeWidth="1.500" /><path d="M6 7h6M6 7l5-5" stroke="#1688f0" strokeWidth="1.500" /></Svg></Tool>
      <Caret />
      <Tool label="Isometric"><Svg w={13} h={14}><path d="M0 0l13 13M6.500 0v14" stroke="#b4b4b4" /></Svg></Tool>
      <Caret />
    </Cell>
    <Cell className="w-[49px] shrink-0">
      <Tool label="Object tracking"><Svg w={13} h={12}><path d="M11 1L1 10.500h12" stroke="#1688f0" strokeWidth="1.500" /><circle cx="5" cy="6.500" r="1.500" fill="#1688f0" /></Svg></Tool>
      <Tool label="Object snap"><Svg w={13} h={13}><rect x="2" y="2" width="10" height="10" stroke="#1688f0" strokeWidth="1.500" /><rect width="4" height="4" fill="#0c3a0c" stroke="#2fc02f" /></Svg></Tool>
      <Caret />
    </Cell>
    <Cell className="w-[80px] shrink-0">
      <Tool label="Annotation visibility"><Person color="#1688f0" mark="dot" /></Tool>
      <Tool label="Auto scale"><Person color="#bdbdbd" mark="bolt" /></Tool>
      <Tool label="Annotation scale"><Person color="#bdbdbd" /></Tool>
      <button className="flex items-center gap-1">1:1 <Caret /></button>
    </Cell>
    <Cell className="w-[29px] shrink-0">
      <Tool label="Workspace"><Settings size={10} strokeWidth={4} className="text-[#ccc]" /></Tool>
      <Caret />
    </Cell>
    <Cell className="w-5 shrink-0"><Tool label="Annotation monitor"><Plus size={14} className="text-[#ccc]" /></Tool></Cell>
    <Cell className="w-[21px] shrink-0"><Tool label="Isolate objects"><Svg w={12} h={12}><path d="M.5.500h5v5h-5zM6 7.500h3v4H4.500V8z" stroke="#ccc" /><circle cx="9.500" cy="3.500" r="2" stroke="#ccc" /></Svg></Tool></Cell>
    <Cell className="w-[20px] shrink-0"><Tool label="Hardware acceleration"><Svg w={14} h={14}><circle cx="7" cy="7" r="6.500" fill="#0d62b8" stroke="#1688f0" /><path d="M4 8l2 2 4-4" stroke="#0a2f5c" /></Svg></Tool></Cell>
    <Cell className="flex-1">
      <Tool label="Clean screen"><Svg w={12} h={10}><path d="M.5.500h11v9H.500z" stroke="#ccc" /><path d="M6 2h4v4zM2 8h4L2 4z" fill="#ccc" /></Svg></Tool>
      <Tool label="Customization"><Menu size={12} /></Tool>
    </Cell>
  </div>
);

const layoutTabs = ['Model', 'Layout1', 'Layout2'];

const StatusBar = ({ layout, onLayout }) => (
  <footer className="flex h-[21px] bg-[#383838] text-[9px]">
    <div className="flex items-start pl-[7px]">
      {layoutTabs.map((name) => (
        <button
          key={name}
          onClick={() => onLayout(name)}
          className={`h-[13px] px-[9px] leading-[13px] [clip-path:polygon(0_0,100%_0,90%_100%,10%_100%)] ${layout === name ? 'bg-[#777] font-bold text-white' : 'bg-[#505050] text-[#a8a8a8]'}`}
        >
          {name}
        </button>
      ))}
      <button aria-label="New layout" className="ml-px flex h-[13px] w-[17px] items-center justify-center rounded-b-md bg-[#505050] text-[#ccc]"><Plus size={9} /></button>
    </div>
    <StatusTools />
  </footer>
);

// ---------- taskbar ----------

const taskItems = [
  { label: 'Start', icon: <FaWindows size={13} /> },
  { label: 'Search', icon: <Search size={13} className="-scale-x-100" /> },
  { label: 'Task View', icon: <Svg w={15} h={12}><path d="M3.500 1.500h8v9h-8zM2 2.500H.5v7H2M13 2.500h1.500v7H13" stroke="#fff" /></Svg> },
  { label: 'Edge', icon: <Svg w={16} h={16}><path d="M1 7.500C1.500 3 4.500.500 8.300.500c4.200 0 6.700 3 6.700 7v1.700H5.700c.2 3.600 5.300 3.800 8.300 1.800v3.300c-5 2.400-12.500 1.500-12-5 .2-2.300 1.500-4 3.800-5-1.200 1.100-1.400 2.200-1.400 2.200h5.500c0-4-4.700-3.900-8.900 1z" fill="#0a7fd9" /></Svg> },
  { label: 'File Explorer', running: true, icon: <Svg w={17} h={15}><path d="M0 1h6l1 2h10v10H0z" fill="#f8d775" /><path d="M0 4h17v9H0z" fill="#fde79b" /><path d="M4 14V9h9v5h-2.500v-2.500h-4V14z" fill="#29b6e8" /></Svg> },
  { label: 'Store', icon: <Svg w={16} h={18}><path d="M5 6C5 0 11 0 11 6" stroke="#fff" strokeWidth="1.500" /><path d="M0 5l16-1v12.500L2 18z" fill="#fff" /><path d="M4 8l3.500-.4V11H4zM8.500 7.500l4-.5v4h-4zM4 12h3.500v3.200L4 15zM8.500 12h4v3.700l-4-.5z" fill="#06161c" /></Svg> },
  { label: 'Dropbox', icon: <FaDropbox size={17} /> },
  { label: 'Infinity', icon: <Svg w={18} h={10}><path d="M9 5C7 2 6 1.500 4.500 1.500a3.500 3.500 0 0 0 0 7C6 8.500 7 8 9 5" stroke="#25c0c0" strokeWidth="1.500" /><path d="M9 5c2-3 3-3.500 4.500-3.500a3.500 3.500 0 0 1 0 7C12 8.500 11 8 9 5" stroke="#8ae08e" strokeWidth="1.500" /></Svg> },
  { label: 'Snipping Tool', icon: <Svg w={17} h={17}><ellipse cx="7" cy="5.500" rx="6" ry="5" fill="#f3f3f3" stroke="#d43a3a" /><path d="M3 4l8 4" stroke="#d43a3a" strokeWidth="1.500" /><path d="M7 8l7 5M13 8l-3 6" stroke="#cdd8df" /><circle cx="10" cy="14" r="1.800" stroke="#2f8fc8" /><circle cx="15" cy="12.500" r="1.500" stroke="#2f8fc8" /></Svg> },
  { label: 'Dictionary', icon: <Svg w={17} h={14}><path d="M0 3l9-3 8 7-8 4z" fill="#f3441d" /><path d="M0 3v3l9 8v-3z" fill="#b2200a" /><path d="M9 11l8-4v3l-8 4z" fill="#e0401c" /><path d="M9 12.500l8-4" stroke="#f2e4dc" strokeWidth=".7" /><path d="M6 4l5-2" stroke="#ffb199" /></Svg> },
  { label: 'Paint', running: true, icon: <Svg w={18} h={17}><path d="M8 3c5 0 8 2.500 8 6s-3 6.500-8 6.500S0 13 0 10c0-2 2-1.500 3-2.500S2 3 8 3z" fill="#b9dff0" /><circle cx="4" cy="11" r="1.500" fill="#e2502d" /><circle cx="5.500" cy="6.500" r="1.500" fill="#3fa34d" /><circle cx="8" cy="13" r="1.500" fill="#2c6fc4" /><path d="M16 0L9.500 15" stroke="#d9934d" strokeWidth="2" /><path d="M14 0h4l-2 5h-3z" fill="#e8b583" /></Svg> },
  { label: 'AutoCAD', running: true, active: true, icon: <Svg w={18} h={18}><path d="M0 0h18v18H0z" fill="#f6e5df" /><path d="M3 15L8 2h3l5 12h-3.500l-1-3H7.500L6 15z" fill="#c5161d" /><path d="M8.500 8.500L9.700 5l1.200 3.500z" fill="#f6e5df" /></Svg> },
  { label: 'Word', running: true, icon: <Svg w={17} h={16}><path d="M8 2h9v12H8z" fill="#fff" /><path d="M10 4.500h6M10 6.500h6M10 8.500h6M10 10.500h6" stroke="#2b5797" /><path d="M0 2l10-2v16L0 14z" fill="#1f5aa8" /><path d="M2 5.500l1.500 5L5 6.500l1.500 4 1.500-5" stroke="#fff" /></Svg> },
  { label: 'Photos', running: true, icon: <Svg w={17} h={17}><path d="M.5.500h16v16H.5z" stroke="#fff" /><path d="M1 16v-4l5-7 4 5 2-2 4 5v3z" fill="#fff" /></Svg> },
];

const Taskbar = () => (
  <div className="flex h-[29px] shrink-0 justify-between bg-linear-to-r from-[#04141b] via-[#0b1519] to-[#04080a] text-white">
    <div className="grid w-[508px] grid-cols-14">
      {taskItems.map(({ label, icon, running, active }) => (
        <button
          key={label}
          aria-label={label}
          className={`flex items-center justify-center border-b ${active ? 'bg-[#4a5459]' : ''} ${running ? 'border-[#5d9cc9]' : 'border-transparent'}`}
        >
          {icon}
        </button>
      ))}
    </div>
    <div className="flex items-center text-[9px]">
      <button aria-label="Get Help" className="mr-3">
        <Svg w={17} h={17}>
          <circle cx="8.500" cy="8.500" r="7.500" fill="#159bd8" stroke="#e8f6fd" strokeWidth="1.500" />
          <path d="M6 6.500c0-3 5-3 5 0 0 2-2.500 2-2.500 4M8.500 11.500v2" stroke="#fff" strokeWidth="1.800" />
        </Svg>
      </button>
      <button aria-label="Show hidden icons" className="mr-2"><ChevronUp size={12} /></button>
      <Svg w={12} h={11} className="mr-[6px]"><path d="M.5 2.500h9v5h-9z" stroke="#fff" /><path d="M2 4h5v2H2z" fill="#fff" /><circle cx="8.500" cy="7.500" r="3.500" fill="#1fa34a" /><path d="M8.500 5.500v4M7 7l1.500-1.500L10 7" stroke="#fff" /></Svg>
      <Svg w={12} h={11} className="mr-[6px]"><path d="M4 9c0-4 3-7 7-7M7 9c0-2 2-4 4-4" stroke="#7c868c" /><circle cx="3.500" cy="7.500" r="3.500" fill="#e01b1b" /><path d="M2 6l3 3M5 6L2 9" stroke="#fff" /></Svg>
      <Svg w={13} h={10} className="mr-2"><path d="M.5 3.500h2l2.500-2v7l-2.500-2h-2zM7 3.500c1 1 1 2 0 3M9 2c2 2 2 4 0 6M11 .500c2.500 3 2.500 6 0 9" stroke="#e4e4e4" strokeWidth=".9" /></Svg>
      <button className="mr-[10px]">IND</button>
      <div className="mr-3 text-center leading-[13px]">
        <div>19.18</div>
        <div>24/08/2017</div>
      </div>
      <button aria-label="Notifications" className="-mr-1">
        <Svg w={17} h={18}>
          <path d="M1 2h12v9H7l-3 3v-3H1z" fill="#fff" />
          <path d="M3 4.500h8M3 6.500h8M3 8.500h5" stroke="#10191d" />
          <circle cx="12" cy="13" r="5" fill="#4b5256" stroke="#888" />
          <text x="9.500" y="16" fontSize="8" fill="#fff">2</text>
        </Svg>
      </button>
    </div>
  </div>
);

const App = () => {
  const [tab, setTab] = useState('Home');
  const [layout, setLayout] = useState('Model');

  return (
    <div className="flex h-screen flex-col overflow-hidden bg-black font-[Roboto,'Open_Sans',sans-serif]">
      <div className="flex min-h-0 flex-1 border-b border-[#17639c]">
        {/* edge of the window behind */}
        <div className="flex w-[6px] shrink-0 flex-col bg-[#e4e4e4]">
          <div className="h-[18px] bg-white" />
          <div className="h-[18px] bg-[#00539b]" />
          <div className="h-[69px] bg-[#f7f7f7]" />
          <div className="mt-auto h-[15px] bg-[#00539b]" />
        </div>
        <div className="flex min-w-0 flex-1 flex-col border-l border-[#4f97c8]">
          <Header tab={tab} onTab={setTab} />
          <Ribbon />
          <FileTabs />
          <Canvas />
          <StatusBar layout={layout} onLayout={setLayout} />
        </div>
      </div>
      <Taskbar />
    </div>
  );
};

export default App;
